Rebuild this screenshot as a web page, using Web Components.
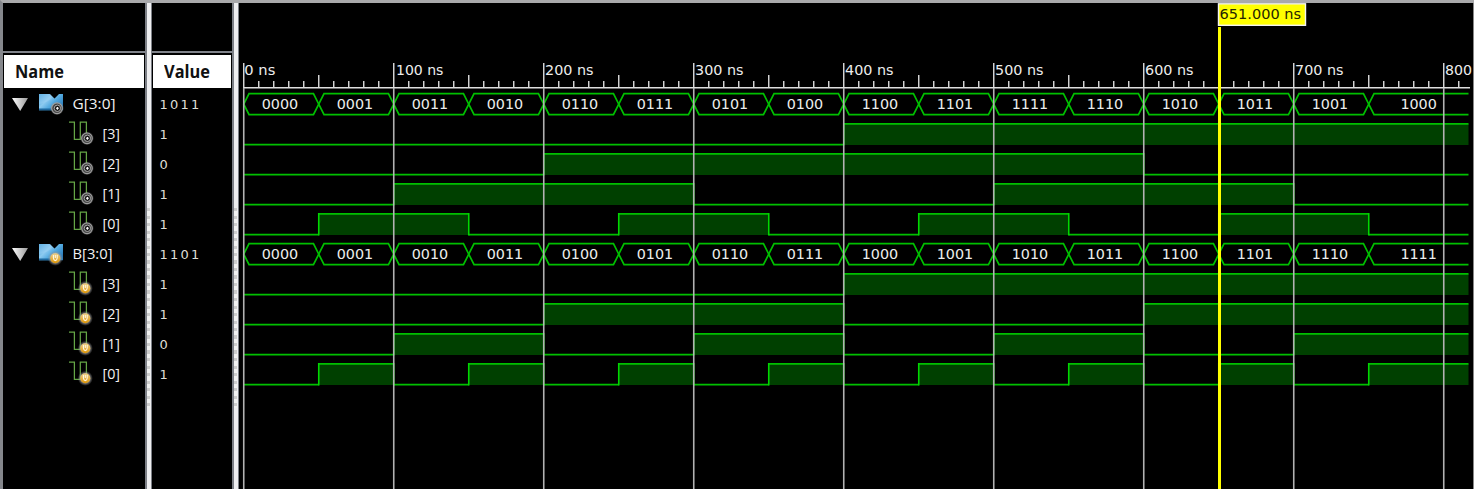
<!DOCTYPE html>
<html lang="en"><head><meta charset="utf-8"><title>Waveform viewer</title>
<style>html,body{margin:0;background:#000;overflow:hidden}wave-viewer{width:1474px;height:489px}</style></head>
<body><wave-viewer></wave-viewer>
<script>
const START=4.75,NS=1.5,END=1229.5;
const signals=[
 {name:'G[3:0]',value:'1011',kind:'out',bus:['0000','0001','0011','0010','0110','0111','0101','0100','1100','1101','1111','1110','1010','1011','1001','1000']},
 {name:'B[3:0]',value:'1101',kind:'in',bus:['0000','0001','0010','0011','0100','0101','0110','0111','1000','1001','1010','1011','1100','1101','1110','1111']}
];
const rows=signals.flatMap(s=>[{...s},...[3,2,1,0].map((b,i)=>({name:`[${b}]`,value:s.value[i],kind:s.kind,bits:s.bus.map(v=>v[i])}))]);
class Base extends HTMLElement{
 constructor(){super();this.attachShadow({mode:'open'})}
 draw(css,html){this.shadowRoot.innerHTML=`<style>${css}</style>${html}`}
}
customElements.define('signal-icon',class extends Base{
 connectedCallback(){
  const bus=this.getAttribute('shape')==='bus',out=this.getAttribute('kind')==='out';
  const base=bus?`<path d="M1 3H12L16.5 7.5L21 3H25V19.3H1Z" fill="url(#b)"/><path d="M1 3H11L14 7Q9 12 1 13Z" fill="#9fd3f3" opacity=".45"/><path d="M1 17.5H14V19.3H1Z" fill="#1d689f"/>`
   :`<path d="M1 1.2H6.4V18.3H12.3V1.2H18.4V14" fill="none" stroke="#65a646" stroke-width="1.25"/>`;
  const badge=out?`<circle cx="19" cy="17.3" r="7" fill="url(#h)"/><circle cx="19" cy="17.3" r="5.3" fill="#454545" stroke="#a0a0a0" stroke-width="1.1"/><circle cx="19.4" cy="17.3" r="3.2" fill="#191919" stroke="#b5b5b5" stroke-width=".9"/><path d="M18 17.3H20.8M19.4 15.9V18.7" stroke="#fff" stroke-width="1.1"/>`
   :`<circle cx="17.3" cy="17.3" r="7.6" fill="url(#h)"/><circle cx="17.3" cy="17.3" r="5" fill="url(#o)"/><path d="M15.4 14V17Q15.8 19.6 17.3 19.6Q18.8 19.6 19.2 17V14M17.3 14V17" fill="none" stroke="#fff8e2" stroke-width="1.1"/>`;
  this.draw(':host{display:block;width:26px;height:26px}svg{display:block}',`<svg width="26" height="26"><defs><linearGradient id="b" x1="0" y1="0" x2="1" y2=".7"><stop stop-color="#2d96d8"/><stop offset=".4" stop-color="#8ccaf0"/><stop offset=".65" stop-color="#52a9e0"/><stop offset="1" stop-color="#2c7bb8"/></linearGradient><radialGradient id="h"><stop offset=".6" stop-color="#aaa" stop-opacity=".8"/><stop offset="1" stop-color="#888" stop-opacity="0"/></radialGradient><linearGradient id="o" x2="0" y2="1"><stop stop-color="#efd18a"/><stop offset="1" stop-color="#dc9507"/></linearGradient></defs>${base}${badge}</svg>`)
 }});
customElements.define('signal-name',class extends Base{
 connectedCallback(){
  const bus=this.hasAttribute('bus');
  this.draw(`:host{display:flex;height:30px;align-items:center;box-sizing:border-box;padding-left:${bus?9:65}px;font:14.5px "Open Sans",sans-serif}
  .t{margin-right:10px;display:block}signal-icon{margin-right:8px}text{fill:#f2f2f2}`,
  `${bus?'<svg class="t" width="16" height="13"><defs><linearGradient id="g" x2="1"><stop stop-color="#fff"/><stop offset="1" stop-color="#999"/></linearGradient></defs><path d="M0 0H16L8.2 13Z" fill="url(#g)"/></svg>':''}<signal-icon shape="${bus?'bus':'bit'}" kind="${this.getAttribute('kind')}"></signal-icon><svg width="50" height="24"><text x=".5" y="16.7" textLength="${bus?(this.getAttribute('kind')==='out'?43:40):17.5}" lengthAdjust="spacingAndGlyphs">${this.getAttribute('label')}</text></svg>`)
 }});
customElements.define('signal-value',class extends Base{
 connectedCallback(){this.draw(':host{display:block;height:30px;line-height:31px;padding-left:7.5px;color:#deded6;font-family:"DejaVu Sans",sans-serif;font-size:13px;letter-spacing:2.2px}','<slot></slot>')}});
customElements.define('pane-divider',class extends Base{
 connectedCallback(){this.draw(`:host{display:block;flex:none;width:7px;box-sizing:border-box;background:#eeeef0;border-left:2px solid #7c7f86;border-right:1.5px solid #7c7f86;padding-top:206px}
 div{height:200px;width:3px;background:repeating-linear-gradient(#cecece 0 3px,#f1f1f1 3px 7.5px)}`,'<div></div>')}});
customElements.define('list-pane',class extends Base{
 connectedCallback(){this.draw(`:host{display:flex;flex-direction:column;flex:none;background:#000}
 .top{height:48px;border-bottom:2.5px solid #80838b}
 header{margin:2px 1px 0;height:33px;background:#fff;font:bold 17px "Open Sans",sans-serif;display:flex;align-items:center;padding-left:11px;box-sizing:border-box}header text{fill:#111}
 main{padding-top:1px}`,`<div class="top"></div><header><svg width="60" height="24"><text x="0" y="17.5" textLength="${this.getAttribute('w')}" lengthAdjust="spacingAndGlyphs">${this.getAttribute('heading')}</text></svg></header><main><slot></slot></main>`)}});
const txt=(x,y,s,w,anchor='start')=>`<text x="${x}" y="${y}" text-anchor="${anchor}" textLength="${w}" lengthAdjust="spacingAndGlyphs">${s}</text>`;
const textCSS='text{font:14.5px "DejaVu Sans",sans-serif;fill:#ededed}';
customElements.define('time-ruler',class extends Base{
 connectedCallback(){
  let h='';
  for(let i=0;i<=81;i++){const x=START+i*15;const y=i%10===0?60:i%5===0?72:78;h+=`<path d="M${x} ${y}V85" stroke="#dedede" stroke-width="1.4"/>`}
  for(let i=0;i<=8;i++)h+=txt(START+i*150+(i===1?2.2:i?1.3:.6),71.7,i===8?'800':`${i*100} ns`,i===8?27:i===1?47.5:i?48.5:31);
  h+=`<path d="M${START} 84.8H1231" stroke="#dedede" stroke-width="1.5"/>`;
  this.draw(':host{display:block;height:86px}svg{display:block}'+textCSS,`<svg width="1234" height="86">${h}</svg>`)
 }});
customElements.define('wave-row',class extends Base{
 set signal(s){
  let h='';const line='fill="none" stroke="#00c000" stroke-width="1.7"';
  if(s.bus)s.bus.forEach((v,i)=>{
   const a=START+i*75,last=i===15,b=last?END:a+75;
   h+=last?`<path d="M${b} 4.7H${a+5.3}L${a} 15.2L${a+5.3} 25.7H${b}" ${line}/>`:`<path d="M${a} 15.2L${a+5.3} 4.7H${b-5.3}L${b} 15.2L${b-5.3} 25.7H${a+5.3}Z" ${line}/>`;
   h+=txt((a+b)/2-(last?0:1.3),20,v,36.5,'middle')
  });else{
   let d='',rise=-1,v1='';
   s.bits.forEach((v,i)=>{const a=START+i*75,b=i===15?END:a+75,y=v==='1'?4.8:25.7;
    if(v==='1'&&rise<0)rise=a;
    if(rise>=0&&(v==='0'||i===15)){const e=v==='0'?a:b;h+=`<rect x="${rise}" y="5" width="${e-rise}" height="21" fill="#004000"/>`;rise=-1}
    if(i&&s.bits[i-1]!==v)v1+=`M${a} 4V26.4`;
    d+=(i?`M${a} ${y}`:`M${a} ${y}`)+`H${b}`});
   h+=`<path d="${d}" ${line}/><path d="${v1}" stroke="#00d800" stroke-width="1.6"/>`
  }
  this.draw(':host{display:block;height:30px}svg{display:block}'+textCSS,`<svg width="1234" height="30">${h}</svg>`)
 }});
customElements.define('wave-overlay',class extends Base{
 connectedCallback(){
  let h='';for(let i=0;i<=8;i++)h+=`<path d="M${START+i*150} 85V486" stroke="#b2b2b2" stroke-width="1.6"/>`;
  this.draw(':host{position:absolute;inset:0}svg{display:block}text{font:14.5px "DejaVu Sans",sans-serif;fill:#242400}',`<svg width="1234" height="486">${h}<path d="M980.5 24V486" stroke="#ff0" stroke-width="3"/><rect x="979.5" y=".8" width="87" height="21.5" fill="#ff0" stroke="#f2f2f2" stroke-width="1.4"/>${txt(980.6,15.8,'651.000 ns',81.5)}</svg>`)
 }});
customElements.define('wave-pane',class extends Base{
 connectedCallback(){this.draw(':host{display:block;position:relative;flex:none;width:1234px;background:#000;overflow:hidden}','<time-ruler></time-ruler><main></main><wave-overlay></wave-overlay>');
 const m=this.shadowRoot.querySelector('main');rows.forEach(r=>{const e=document.createElement('wave-row');e.signal=r;m.append(e)})}
});
customElements.define('wave-viewer',class extends Base{
 connectedCallback(){
  this.draw(`:host{display:flex;box-sizing:border-box;border-top:3px solid #a9a9ab;border-left:3px solid #85878c;background:#000;overflow:hidden}
  list-pane:first-of-type{width:142px}.values{width:80px}pane-divider{margin-top:-1px}.edge{width:1px;background:#888;flex:none}`,
  `<list-pane heading="Name" w="49">${rows.map(r=>`<signal-name label="${r.name}" kind="${r.kind}" ${r.bus?'bus':''}></signal-name>`).join('')}</list-pane><pane-divider></pane-divider><list-pane class="values" heading="Value" w="46">${rows.map(r=>`<signal-value>${r.value}</signal-value>`).join('')}</list-pane><pane-divider></pane-divider><wave-pane></wave-pane><div class="edge"></div>`)
 }});
</script></body></html>
